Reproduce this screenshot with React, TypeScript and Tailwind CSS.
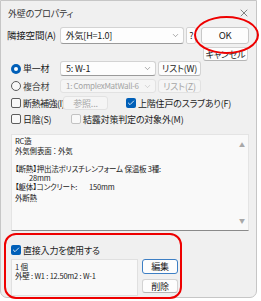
import { X, ChevronDown, Check } from 'lucide-react'

const jp = "font-['Noto_Sans_CJK_JP','Noto_Sans',sans-serif] [font-feature-settings:'palt']"

const Select = ({ text, w, disabled }: { text: string; w: string; disabled?: boolean }) => (
    <div className={`${w} h-full flex items-center justify-between pl-[5px] pr-[3px] rounded-[3px] border ${disabled ? 'border-[#e2e2e2] bg-[#f5f5f5] text-[#a3a3a3]' : 'border-[#d3d3d3] border-b-[#9a9a9a] bg-[#fdfdfd] text-[#1b1b1b]'}`}>
        <span className="leading-[12px]">{text}</span>
        <ChevronDown size={9} strokeWidth={1.3} className={`shrink-0 ${disabled ? 'text-[#b0b0b0]' : 'text-[#555]'}`} />
    </div>
)

const Btn = ({ text, w, disabled, accent }: { text: string; w: string; disabled?: boolean; accent?: boolean }) => (
    <div className={`${w} h-full flex items-center justify-center rounded-[3px] border ${disabled ? 'border-[#e2e2e2] bg-[#f5f5f5] text-[#a6a6a6]' : accent ? 'border-[#3d7fc4] bg-[#fdfdfd] text-[#1b1b1b]' : 'border-[#d3d3d3] border-b-[#b5b5b5] bg-[#fdfdfd] text-[#1b1b1b]'}`}>
        {text}
    </div>
)

const Box = ({ checked, disabled }: { checked?: boolean; disabled?: boolean }) =>
    checked ? (
        <div className="w-[10px] h-[10px] rounded-[2px] bg-[#005fb8] flex items-center justify-center shrink-0">
            <Check size={8} strokeWidth={2.5} className="text-white" />
        </div>
    ) : (
        <div className={`w-[10px] h-[10px] rounded-[2px] border bg-[#f8f8f8] shrink-0 ${disabled ? 'border-[#c2c2c2]' : 'border-[#5c5c5c]'}`} />
    )

export default function App() {
    return (
        <div className={`w-[261px] h-[301px] bg-white relative text-[9px] tracking-[-0.2px] leading-none whitespace-nowrap ${jp}`}>
            <div className="w-[257px] h-[298px] bg-[#f0f0f0] border border-[#c6c6c6] rounded-b-[7px] flex flex-col text-[#1b1b1b]">
                {/* title */}
                <div className="h-[24px] flex items-center justify-between pl-[7px] pr-[6px]">
                    <span className="text-[9px] text-[#333]">外壁のプロパティ</span>
                    <X size={12} strokeWidth={1.2} className="text-[#333]" />
                </div>

                <div className="flex flex-col pl-[6px] pr-[7px]">
                    {/* neighbour space */}
                    <div className="h-[17px] mt-[2px] flex items-center">
                        <span className="w-[53px] text-[9.5px]">隣接空間(A)</span>
                        <Select text="外気[H=1.0]" w="w-[125px]" />
                        <div className="w-[10px] h-full ml-[2px] rounded-[2px] border border-[#d3d3d3] bg-[#fdfdfd] flex items-center justify-center">?</div>
                        <div className="w-[48px] h-full ml-[5px] rounded-[3px] border border-[#c8c8c8] bg-[#fdfdfd] flex items-center justify-center text-[9.5px]">OK</div>
                    </div>
                    <div className="h-[14px] mt-[3px] flex justify-end pr-[1px]">
                        <Btn text="キャンセル" w="w-[45px]" />
                    </div>

                    {/* material */}
                    <div className="h-[15px] flex items-center">
                        <div className="w-[53px] flex items-center pl-[4px] gap-[2px]">
                            <div className="w-[10px] h-[10px] rounded-full bg-[#005fb8] flex items-center justify-center">
                                <div className="w-[4px] h-[4px] rounded-full bg-white" />
                            </div>
                            <span>単一材</span>
                        </div>
                        <Select text="5: W-1" w="w-[96px]" />
                        <div className="w-[43px] h-full ml-[2px]"><Btn text="リスト(W)" w="w-full" /></div>
                    </div>
                    <div className="h-[14px] mt-[3px] flex items-center">
                        <div className="w-[53px] flex items-center pl-[4px] gap-[2px]">
                            <div className="w-[10px] h-[10px] rounded-full border border-[#5c5c5c] bg-[#f8f8f8]" />
                            <span className="text-[#444]">複合材</span>
                        </div>
                        <div className="w-[96px] h-full text-[8px] tracking-[-0.3px]"><Select text="1: ComplexMatWall-6" w="w-full" disabled /></div>
                        <div className="w-[43px] h-full ml-[2px]"><Btn text="リスト(Z)" w="w-full" disabled /></div>
                    </div>

                    {/* options */}
                    <div className="h-[14px] mt-[3px] flex items-center">
                        <div className="w-[56px] flex items-center pl-[4px] gap-[2px]">
                            <Box />
                            <span className="tracking-[-0.5px]">断熱補強(I)</span>
                        </div>
                        <div className="h-full"><Btn text="参照..." w="w-[45px]" disabled /></div>
                        <div className="flex items-center gap-[2px] ml-[18px]">
                            <Box checked />
                            <span>上階住戸のスラブあり(F)</span>
                        </div>
                    </div>
                    <div className="h-[14px] mt-[2px] flex items-center">
                        <div className="w-[64px] flex items-center pl-[4px] gap-[2px]">
                            <Box />
                            <span>日陰(S)</span>
                        </div>
                        <div className="flex items-center gap-[2px]">
                            <Box disabled />
                            <span>結露対策判定の対象外(M)</span>
                        </div>
                    </div>

                    {/* description */}
                    <div className="mt-[8px] ml-[4px] h-[97px] bg-[#f9f9f9] border border-[#e4e4e4] border-b-[#8a8a8a] flex text-[7.5px] leading-[9px] tracking-[-0.2px] text-[#222]">
                        <div className="flex-1 pl-[3px] pt-[1px] whitespace-pre">
                            <div>RC造</div>
                            <div className="mt-[1px]">外気側表面 ： 外気</div>
                            <div className="mt-[9px]">【断熱】押出法ポリスチレンフォーム 保温板 3種:</div>
                            <div className="pl-[14px]">28mm</div>
                            <div>{'【躯体】コンクリート:        150mm'}</div>
                            <div className="mt-[2px]">外断熱</div>
                        </div>
                        <div className="w-[12px] flex flex-col items-center justify-between py-[5px] text-[#a8a8a8] text-[6px]">
                            <span>▲</span>
                            <span>▼</span>
                        </div>
                    </div>

                    {/* direct input */}
                    <div className="h-[12px] mt-[13px] ml-[4px] flex items-center gap-[2px]">
                        <Box checked />
                        <span>直接入力を使用する</span>
                    </div>
                    <div className="mt-[3px] ml-[4px] flex gap-[4px]">
                        <div className="w-[127px] h-[37px] bg-[#f9f9f9] border border-[#e0e0e0] pl-[3px] pt-[2px] text-[7.5px] leading-[9px] text-[#222]">
                            <div>1 個</div>
                            <div>外壁 : W1 : 12.50m2 : W-1</div>
                        </div>
                        <div className="flex flex-col gap-[5px]">
                            <div className="h-[15px]"><Btn text="編集" w="w-[36px]" accent /></div>
                            <div className="h-[14px]"><Btn text="削除" w="w-[36px]" /></div>
                        </div>
                    </div>
                </div>
            </div>

            {/* annotation marks */}
            <div className="absolute left-[194px] top-[16px] w-[65px] h-[38px] rounded-[50%] border-2 border-[#ee0000]" />
            <div className="absolute left-[4px] top-[233px] w-[178px] h-[66px] rounded-[12px] border-2 border-[#ee0000]" />
        </div>
    )
}
